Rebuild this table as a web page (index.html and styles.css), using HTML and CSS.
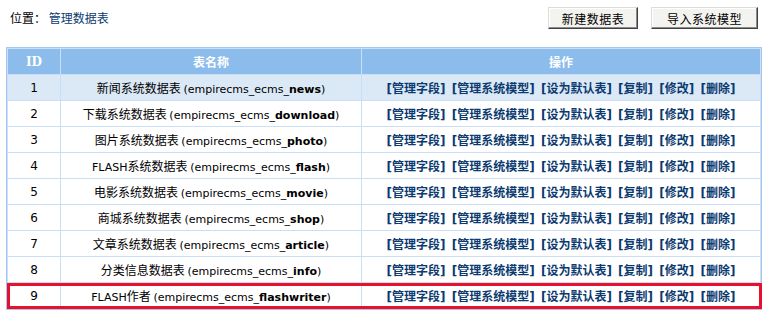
FILE: index.html
```html
<!DOCTYPE html>
<html>
<head>
<meta charset="utf-8">
<link rel="stylesheet" href="styles.css">
</head>
<body>
<div class="topbar">
  <div class="crumb">位置： <a href="#">管理数据表</a></div>
  <div class="actions">
    <button class="btn btn-new">新建数据表</button>
    <button class="btn btn-imp">导入系统模型</button>
  </div>
</div>
<table class="grid">
  <thead>
    <tr><th class="c-id">ID</th><th class="c-name">表名称</th><th class="c-ops">操作</th></tr>
  </thead>
  <tbody>
    <tr class="hl"><td>1</td><td>新闻系统数据表 <span class="en">(empirecms_ecms_<b>news</b>)</span></td><td class="ops"><a>[管理字段]</a> <a>[管理系统模型]</a> <a>[设为默认表]</a> <a>[复制]</a> <a>[修改]</a> <a>[删除]</a></td></tr>
    <tr><td>2</td><td>下载系统数据表 <span class="en">(empirecms_ecms_<b>download</b>)</span></td><td class="ops"><a>[管理字段]</a> <a>[管理系统模型]</a> <a>[设为默认表]</a> <a>[复制]</a> <a>[修改]</a> <a>[删除]</a></td></tr>
    <tr><td>3</td><td>图片系统数据表 <span class="en">(empirecms_ecms_<b>photo</b>)</span></td><td class="ops"><a>[管理字段]</a> <a>[管理系统模型]</a> <a>[设为默认表]</a> <a>[复制]</a> <a>[修改]</a> <a>[删除]</a></td></tr>
    <tr><td>4</td><td><span class="en">FLASH</span>系统数据表 <span class="en">(empirecms_ecms_<b>flash</b>)</span></td><td class="ops"><a>[管理字段]</a> <a>[管理系统模型]</a> <a>[设为默认表]</a> <a>[复制]</a> <a>[修改]</a> <a>[删除]</a></td></tr>
    <tr><td>5</td><td>电影系统数据表 <span class="en">(empirecms_ecms_<b>movie</b>)</span></td><td class="ops"><a>[管理字段]</a> <a>[管理系统模型]</a> <a>[设为默认表]</a> <a>[复制]</a> <a>[修改]</a> <a>[删除]</a></td></tr>
    <tr><td>6</td><td>商城系统数据表 <span class="en">(empirecms_ecms_<b>shop</b>)</span></td><td class="ops"><a>[管理字段]</a> <a>[管理系统模型]</a> <a>[设为默认表]</a> <a>[复制]</a> <a>[修改]</a> <a>[删除]</a></td></tr>
    <tr><td>7</td><td>文章系统数据表 <span class="en">(empirecms_ecms_<b>article</b>)</span></td><td class="ops"><a>[管理字段]</a> <a>[管理系统模型]</a> <a>[设为默认表]</a> <a>[复制]</a> <a>[修改]</a> <a>[删除]</a></td></tr>
    <tr><td>8</td><td>分类信息数据表 <span class="en">(empirecms_ecms_<b>info</b>)</span></td><td class="ops"><a>[管理字段]</a> <a>[管理系统模型]</a> <a>[设为默认表]</a> <a>[复制]</a> <a>[修改]</a> <a>[删除]</a></td></tr>
    <tr><td>9</td><td><span class="en">FLASH</span>作者 <span class="en">(empirecms_ecms_<b>flashwriter</b>)</span></td><td class="ops"><a>[管理字段]</a> <a>[管理系统模型]</a> <a>[设为默认表]</a> <a>[复制]</a> <a>[修改]</a> <a>[删除]</a></td></tr>
  </tbody>
</table>
<div class="mark"></div>
</body>
</html>
```

FILE: styles.css
```css
html, body {
  margin: 0;
  padding: 0;
  background: #ffffff;
}
body {
  font-family: "Noto Sans CJK SC", sans-serif;
  font-size: 12px;
  color: #000;
  position: relative;
}
.topbar {
  display: flex;
  justify-content: space-between;
  align-items: center;
  padding: 7px 16px 0 10px;
  height: 22px;
}
.crumb {
  line-height: 22px;
}
.crumb a {
  color: #0b3a70;
  text-decoration: none;
}
.actions {
  display: flex;
  gap: 13px;
}
.btn {
  font-family: "Noto Sans CJK SC", sans-serif;
  font-size: 12px;
  height: 22px;
  padding: 0;
  background: #f3f3ef;
  color: #000;
  border: 1px solid;
  border-color: #dcdcd8 #404040 #404040 #dcdcd8;
  box-shadow: inset -1px -1px 0 #8c8c8c, inset 1px 1px 0 #ffffff;
  letter-spacing: 0.5px;
}
.btn-new { width: 90px; }
.btn-imp { width: 107px; }

.grid {
  margin: 18px 0 0 6px;
  width: 756px;
  border: 1px solid #a4c8ee;
  border-collapse: separate;
  border-spacing: 1px;
  background: #c9def7;
  table-layout: fixed;
}
.grid th, .grid td {
  text-align: center;
  padding: 0;
  height: 25px;
  white-space: nowrap;
}
.grid th {
  background: #8cbcec;
  color: #fff;
  font-weight: bold;
}
.c-id { width: 52px; }
.c-name { width: 300px; }
.grid td {
  background: #fff;
}
.grid tr.hl td {
  background: #dbe9f6;
}
.en {
  font-family: "DejaVu Sans", sans-serif;
  font-size: 11px;
}
.grid th.c-id {
  font-family: "DejaVu Serif", serif;
  font-size: 12px;
}
.grid td:first-child {
  font-family: "DejaVu Sans", sans-serif;
  font-size: 12px;
}
.ops {
  font-family: "DejaVu Sans", "Noto Sans CJK SC", sans-serif;
  font-weight: bold;
  word-spacing: 2px;
}
.ops a {
  color: #0b3a70;
  text-decoration: none;
}
.mark {
  position: absolute;
  left: 7px;
  top: 283px;
  width: 749px;
  height: 20px;
  border: 3px solid #e8102c;
}
```
